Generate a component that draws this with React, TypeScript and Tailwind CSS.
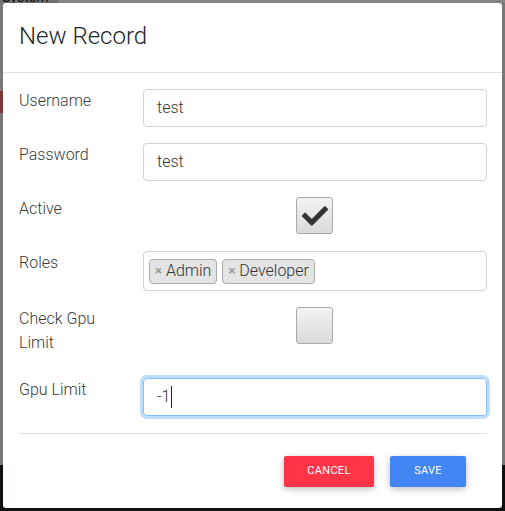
import React from "react";
import { FaCheck } from "react-icons/fa";

const font = { fontFamily: "Roboto, 'Liberation Sans', sans-serif" };

function Label({ children }: { children: React.ReactNode }) {
  return (
    <div className="w-[124px] shrink-0 text-[16px] font-light leading-[24px] text-[#3a3a3a]">{children}</div>
  );
}

function Checkbox({ checked }: { checked: boolean }) {
  return (
    <div className="flex h-[37px] w-[37px] items-center justify-center rounded-[3px] border border-[#a9a9a9] bg-gradient-to-b from-[#f3f3f3] to-[#dadada]">
      {checked && <FaCheck className="text-[#333]" size={26} />}
    </div>
  );
}

function Tag({ text }: { text: string }) {
  return (
    <div className="flex h-[25px] items-center rounded-[4px] border border-[#aaa] bg-[#e4e4e4] px-[5px] text-[16px] font-light text-[#333]">
      <span className="mr-[4px] text-[13px] font-bold text-[#999]">×</span>
      {text}
    </div>
  );
}

export default function App() {
  return (
    <div className="relative h-[511px] w-[505px] overflow-hidden" style={font}>
      {/* backdrop page */}
      <div className="flex h-full flex-col">
        <div className="h-[465px] bg-[#787878]">
          <div className="mt-[-9px] flex h-[12px]">
            <div className="w-[58px] bg-[#6f6f6f] pl-[2px] text-[14px] leading-[12px] text-[#111]">System</div>
            <div className="flex-1 bg-[#858585]" />
          </div>
          <div className="mt-[88px] h-[22px] w-[4px] bg-[#7c3636]" />
        </div>
        <div className="flex-1 bg-[#0d1111]" />
      </div>

      {/* modal */}
      <div className="absolute left-[3px] top-[3px] flex h-[505px] w-[499px] flex-col rounded-[3px] bg-white">
        <div className="flex h-[70px] items-start border-b border-[#dee2e6] px-[16px] pt-[15px]">
          <h5 className="text-[24px] font-light leading-[36px] text-[#212529]">New Record</h5>
        </div>

        <div className="flex flex-col gap-[16px] pb-[17px] pl-[16px] pr-[15px] pt-[16px]">
          <div className="flex h-[38px]">
            <Label>Username</Label>
            <div className="flex h-[38px] flex-1 items-center rounded-[4px] border border-[#ced4da] px-[13px] text-[16px] font-light text-[#333]">
              test
            </div>
          </div>
          <div className="flex h-[38px]">
            <Label>Password</Label>
            <div className="flex h-[38px] flex-1 items-center rounded-[4px] border border-[#ced4da] px-[13px] text-[16px] font-light text-[#333]">
              test
            </div>
          </div>
          <div className="flex h-[38px]">
            <Label>Active</Label>
            <div className="flex flex-1 justify-center pr-[1px]">
              <Checkbox checked />
            </div>
          </div>
          <div className="flex h-[40px]">
            <Label>Roles</Label>
            <div className="flex h-[40px] flex-1 items-center gap-[5px] rounded-[4px] border border-[#ced4da] px-[5px]">
              <Tag text="Admin" />
              <Tag text="Developer" />
            </div>
          </div>
          <div className="flex h-[55px]">
            <Label>
              Check Gpu
              <br />
              Limit
            </Label>
            <div className="flex flex-1 justify-center pr-[1px]">
              <Checkbox checked={false} />
            </div>
          </div>
          <div className="flex h-[38px]">
            <Label>Gpu Limit</Label>
            <div className="flex h-[38px] flex-1 items-center rounded-[4px] border border-[#80bdff] px-[13px] text-[16px] font-light text-[#333] shadow-[0_0_0_3px_rgba(0,123,255,0.25)]">
              -1
              <span className="ml-[1px] h-[22px] w-px bg-[#222]" />
            </div>
          </div>
        </div>

        <div className="ml-[16px] mr-[15px] border-t border-[#e0e0e0]" />

        <div className="flex justify-end gap-[16px] pr-[36px] pt-[22px]">
          <div className="flex h-[31px] w-[90px] items-center justify-center rounded-[2px] bg-[#ff3547] text-[11px] font-normal uppercase tracking-[0.3px] text-white shadow-[0_2px_5px_0_rgba(0,0,0,0.16),0_2px_10px_0_rgba(0,0,0,0.12)]">
            Cancel
          </div>
          <div className="flex h-[31px] w-[76px] items-center justify-center rounded-[2px] bg-[#4285f4] text-[11px] font-normal uppercase tracking-[0.3px] text-white shadow-[0_2px_5px_0_rgba(0,0,0,0.16),0_2px_10px_0_rgba(0,0,0,0.12)]">
            Save
          </div>
        </div>
      </div>
    </div>
  );
}
